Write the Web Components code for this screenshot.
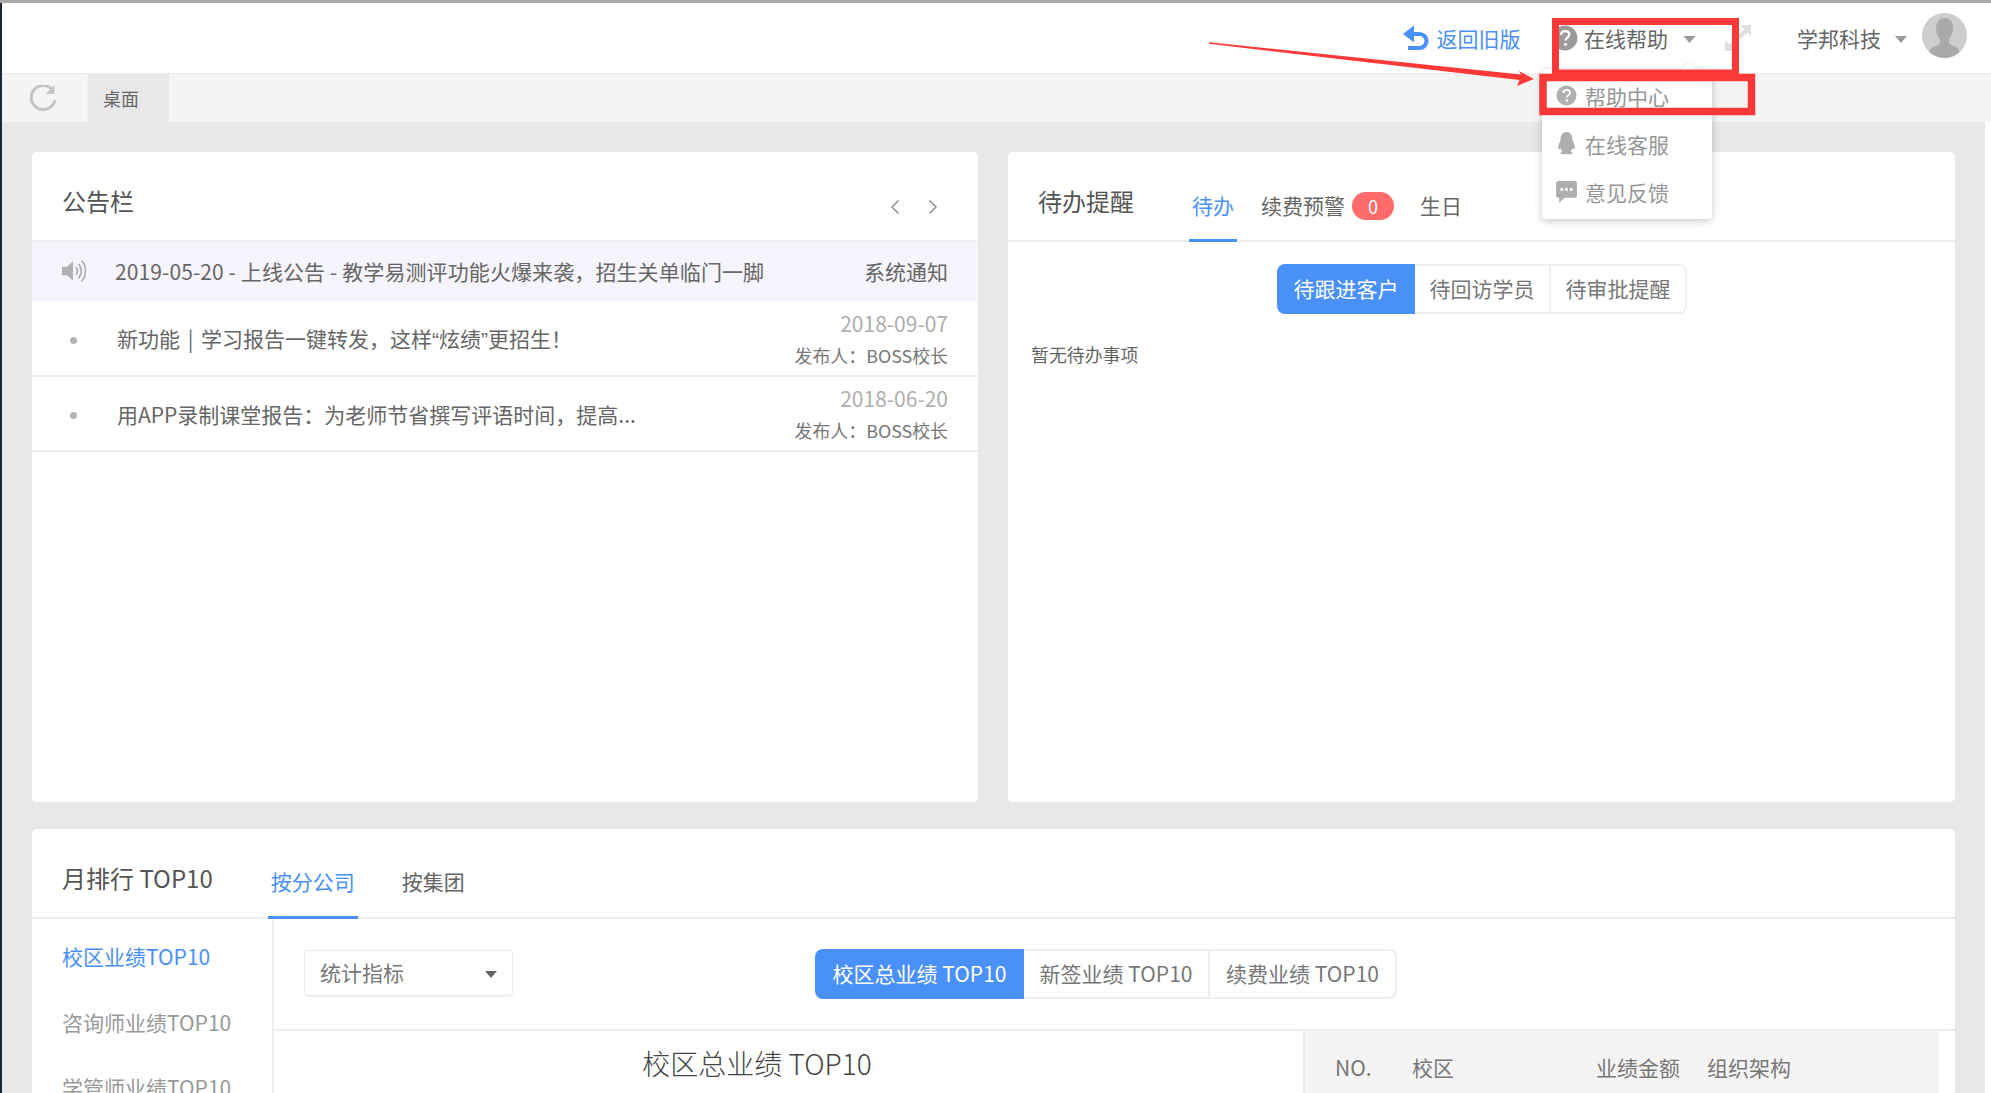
<!DOCTYPE html>
<html lang="zh"><head><meta charset="utf-8"><title>桌面</title>
<style>
html,body{margin:0;padding:0;height:1093px;overflow:hidden;background:#fff;font-family:"Noto Sans CJK SC","Noto Sans",sans-serif;color:#666}
</style></head><body>
<x-app></x-app>
<script>
const ICON={
q:c=>`<svg viewBox="0 0 24 24" width="100%" height="100%" style="display:block"><circle cx="12" cy="12" r="11.500" fill="${c}"/><path d="M8.300 9.300c.1-2.400 1.700-3.700 3.900-3.700 2.100 0 3.700 1.200 3.700 3.200 0 1.500-.8 2.300-1.800 3-1 .7-1.500 1.200-1.500 2.500" fill="none" stroke="#fff" stroke-width="2.200"/><circle cx="12.500" cy="17.800" r="1.500" fill="#fff"/></svg>`,
caret:c=>`<svg viewBox="0 0 12 7" width="100%" height="100%" style="display:block"><path d="M0 0h12L6 7z" fill="${c}"/></svg>`
};
function def(name,css,html){
  customElements.define(name,class extends HTMLElement{
    constructor(){super();const r=this.attachShadow({mode:'open'});
      const a=n=>this.getAttribute(n)||'';
      r.innerHTML=`<style>${css}</style>${typeof html==='function'?html(a,this):html}`;}
  });
}
def('x-help-menu',`
:host{position:absolute;left:1542px;top:66px;width:170px;height:150px;background:#fff;border-radius:4px;box-shadow:0 2px 8px rgba(0,0,0,.22);z-index:5;display:flex;flex-direction:column;padding-top:2.500px;box-sizing:border-box}
.tip{position:absolute;left:142px;top:-5px;width:10px;height:10px;background:#fff;transform:rotate(45deg);box-shadow:-1px -1px 2px rgba(0,0,0,.06)}
.i{height:48px;display:flex;align-items:center;padding-left:14px;gap:8px;font-size:21px;color:#969696;position:relative}
.ic{width:21px;height:25px;flex:none;display:block}
`,`<div class="tip"></div>
<div class="i"><span class="ic">${ICON.q('#b0b0b0')}</span>帮助中心</div>
<div class="i"><span class="ic"><svg viewBox="0 0 20 24" width="100%" height="100%" style="display:block"><path d="M10 1c3.800 0 5.700 3 5.700 7 0 1.500.8 2.500 1.500 4.200.9 2.200 1 4.800.1 5.300-.5.3-1.200-.5-1.700-1.500-.2 1.500-.8 2.800-1.800 3.700 1.200.4 2 .9 2 1.500 0 1-2 1.300-3.600 1.300-1 0-1.800-.2-2.200-.7-.4.5-1.200.7-2.200.7-1.600 0-3.600-.3-3.600-1.300 0-.6.8-1.100 2-1.500-1-.9-1.600-2.200-1.800-3.700-.5 1-1.200 1.800-1.700 1.500-.9-.5-.8-3.100.1-5.300C3.500 10.500 4.300 9.500 4.300 8c0-4 1.900-7 5.700-7z" fill="#aeaeae"/></svg></span>在线客服</div>
<div class="i"><span class="ic"><svg viewBox="0 0 20 24" width="100%" height="100%" style="display:block"><path d="M2 2h16a2 2 0 0 1 2 2v12a2 2 0 0 1-2 2H8l-5 5v-5H2a2 2 0 0 1-2-2V4a2 2 0 0 1 2-2z" fill="#aeaeae"/><g fill="#fff"><circle cx="5.500" cy="10" r="1.500"/><circle cx="10" cy="10" r="1.500"/><circle cx="14.500" cy="10" r="1.500"/></g></svg></span>意见反馈</div>`);

def('x-annotation',`
:host{position:absolute;left:0;top:0;width:1991px;height:1093px;pointer-events:none;z-index:9;display:block}
svg{display:block}`,`<svg width="1991" height="1093" viewBox="0 0 1991 1093">
<g fill="none" stroke="#fc3838">
<path d="M1555.500 18.500H1735.500V70H1555.500Z" stroke-width="7"/>
<path d="M1543 74.500H1751.500V108.500H1543Z" stroke-width="7.500"/>
</g>
<polygon points="1209,39.300 1521,71.500 1519,68 1534,76 1517,83 1519.500,77 1209,40.800" fill="#fc3838"/>
</svg>`);

def('x-app-header',`
:host{display:flex;align-items:center;justify-content:flex-end;height:70px;padding-right:24px;background:#fff;border-bottom:1px solid #ececec;box-sizing:content-box;font-size:21px;color:#666}
.f{display:flex;align-items:center}
.back{color:#4a90f9;gap:8px;margin-right:31.500px}
.back svg{width:27px;height:27px;display:block}
.q{width:26px;height:26px;margin-right:6px;flex:none}
.c{width:13px;height:7px;flex:none;margin-left:15px;margin-top:2px;display:block}
.fs{width:26px;height:26px;margin:0 46px 0 29px;flex:none}
.fs svg,.ava svg{display:block}
.ava{width:45px;height:45px;border-radius:50%;overflow:hidden;background:#cdcdcd;margin-left:15px;margin-top:-6px;flex:none}
`,`<div class="f back"><svg viewBox="0 0 27 27"><path d="M9 9h8.500a6.500 6.500 0 0 1 0 14H6" fill="none" stroke="#4a90f9" stroke-width="4.200"/><path d="M12 0v17L1 8.500z" fill="#4a90f9" transform="translate(0 .5)"/></svg><span>返回旧版</span></div>
<div class="f"><span class="q">${ICON.q('#9a9a9a')}</span><span>在线帮助</span><span class="c">${ICON.caret('#9a9a9a')}</span></div>
<span class="fs"><svg viewBox="0 0 26 26" width="26" height="26"><g fill="#dedede"><path d="M15 0h11v11l-3.800-3.800-6.500 6.500-2.900-2.900 6.500-6.500z"/><path d="M0 15v11h11l-3.800-3.800 6.500-6.500-2.900-2.900-6.500 6.500z"/></g></svg></span>
<span>学邦科技</span><span class="c" style="margin-left:14px;width:12px">${ICON.caret('#9a9a9a')}</span>
<span class="ava"><svg viewBox="0 0 45 45" width="45" height="45"><path d="M22.500 5c5.500 0 8.500 4.500 8.500 10.500 0 4-1.500 8-4 10.500v3.500c0 1.500 3 3 7 4.500 3 1.200 4 5 4 11.500H7c0-6.500 1-10.300 4-11.500 4-1.500 7-3 7-4.500V26c-2.500-2.500-4-6.500-4-10.500C14 9.500 17 5 22.500 5z" fill="#a9a9a9"/></svg></span>`);

def('x-tab-strip',`
:host{display:flex;height:48px;background:#f4f4f4;align-items:stretch}
.r{width:84px;display:flex;align-items:center;padding-left:28px;box-sizing:border-box;border-right:2px solid #f8f8f8}
.r svg{width:27px;height:26px;display:block}
.t{width:81px;margin-left:2px;background:#e8e8e8;font-size:17.900px;color:#666;padding-left:15px;box-sizing:border-box;display:flex;align-items:center}
`,`<div class="r"><svg viewBox="0 0 27 26"><path d="M23 5.500A12 12 0 1 0 25 15" fill="none" stroke="#c4c4c4" stroke-width="3"/><path d="M24.500 0v9h-9z" fill="#c4c4c4"/></svg></div><div class="t">桌面</div>`);

def('x-card',`
:host{display:flex;flex-direction:column;background:#fff;border-radius:5px;overflow:hidden;min-width:0}
.h{height:88px;border-bottom:2px solid #eee;display:flex;align-items:flex-end;box-sizing:content-box;padding-left:30px;flex:none;position:relative}
::slotted([slot=title]){font-size:24px;line-height:34px;color:#555;margin-bottom:22px;flex:none}
`,`<div class="h"><slot name="title"></slot><slot name="tools"></slot></div><slot></slot>`);

def('x-notice-row',`
:host{display:flex;height:73px;border-bottom:2px solid #eee;align-items:center;padding:0 30px 0 0;box-sizing:content-box;font-size:21px;color:#666}
.d{width:7px;height:7px;background:#b4b4b4;border-radius:50%;margin:4px 0 0 38px;flex:none}
.t{margin-left:40px;flex:1;line-height:30px;margin-top:1px;word-spacing:3px}
.t span{font-family:"Liberation Sans",sans-serif}
.m{text-align:right;display:flex;flex-direction:column;align-items:flex-end;padding-top:2px}
.a{color:#aeaeae;line-height:33px;height:33px}
.b{font-size:17.900px;color:#777;line-height:33px;height:33px;margin-top:-1px}
`,(a)=>`<span class="d"></span><span class="t">${a('text').replace(/[“”]/g,m=>`<span>${m}</span>`)}</span><div class="m"><span class="a">${a('date')}</span><span class="b">发布人：BOSS校长</span></div>`);

def('x-pinned-row',`
:host{display:flex;height:60px;background:#f6f4fc;align-items:center;padding:0 30px;font-size:21px;color:#666}
svg{width:24px;height:24px;display:block;flex:none;margin-top:-2px}
.t{margin-left:29px;flex:1;margin-top:-2px;letter-spacing:.1px}
.s{margin-top:-2px}
`,`<svg viewBox="0 0 24 22" preserveAspectRatio="none"><path d="M0 7h5l6-5v18l-6-5H0z" fill="#b0b0b0"/><g fill="none" stroke="#b0b0b0" stroke-width="1.800"><path d="M14 7.500a5 5 0 0 1 0 7"/><path d="M16.500 4.500a9 9 0 0 1 0 13"/><path d="M19.500 1.500a13 13 0 0 1 0 19"/></g></svg><span class="t">2019-05-20 - 上线公告 - 教学易测评功能火爆来袭，招生关单临门一脚</span><span class="s">系统通知</span>`);

def('x-notice-card',`
:host{display:flex;width:946px;height:650px}
x-card{width:100%}
.nav{margin-left:auto;display:flex;gap:28px;padding:0 40px 26px 0;align-self:flex-end}
.nav svg{width:10px;height:14px;display:block}
`,`<x-card><span slot="title">公告栏</span>
<div class="nav" slot="tools"><svg viewBox="0 0 10 14"><path d="M8.500 .5 2 7l6.500 6.500" fill="none" stroke="#909090" stroke-width="1.500"/></svg><svg viewBox="0 0 10 14"><path d="M1.500 .5 8 7l-6.500 6.500" fill="none" stroke="#909090" stroke-width="1.500"/></svg></div>
<x-pinned-row></x-pinned-row>
<x-notice-row text="新功能 | 学习报告一键转发，这样“炫绩”更招生！" date="2018-09-07"></x-notice-row>
<x-notice-row text="用APP录制课堂报告：为老师节省撰写评语时间，提高..." date="2018-06-20"></x-notice-row>
</x-card>`);

def('x-seg',`
:host{display:inline-flex;height:50px;font-size:21px;color:#777}
.b{display:flex;align-items:center;justify-content:center;box-sizing:border-box;border:2px solid #eee;border-left:0;padding-bottom:3px}
.b:last-child{border-radius:0 8px 8px 0}
.on{background:#4a90f9;color:#fff;border:0;border-radius:8px 0 0 8px}
`,(a)=>{const w=a('widths').split(',');return a('items').split(',').map((t,i)=>`<div class="b ${i==0?'on':''}" style="width:${w[i]}px">${t}</div>`).join('')});

def('x-tab',`
:host{display:flex;height:58px;align-items:flex-start;box-sizing:border-box;position:relative;line-height:30px}
:host([on]){color:#4a90f9}
:host([on])::after{content:"";position:absolute;left:-3px;right:-3px;bottom:-2px;height:3px;background:#4a90f9}
`,`<slot></slot>`);

def('x-todo-card',`
:host{display:flex;width:947px;height:650px}
x-card{width:100%}
.tabs{margin-left:58px;display:flex;align-items:flex-start;height:50px;align-self:flex-end;font-size:21px;color:#666}
.bd{display:inline-flex;align-items:center;justify-content:center;width:42px;height:28px;border-radius:14px;background:#ff6b6b;color:#fff;font-size:18px;margin-left:7px;line-height:28px;position:relative;top:2px}
.body{position:relative;flex:1}
.seg{display:flex;padding-top:22px;margin-left:269px}
.e{font-size:17.900px;color:#666;margin:25px 0 0 23px;line-height:30px}
`,`<x-card><span slot="title">待办提醒</span>
<div class="tabs" slot="tools">
<x-tab on style="height:50px">待办</x-tab>
<x-tab style="height:50px;margin-left:27px">续费预警<span class="bd">0</span></x-tab>
<x-tab style="height:50px;margin-left:26px">生日</x-tab></div>
<div class="body"><div class="seg"><x-seg items="待跟进客户,待回访学员,待审批提醒" widths="138,136,136"></x-seg></div>
<div class="e">暂无待办事项</div></div></x-card>`);

def('x-select',`
:host{display:flex;width:209px;height:46px;box-sizing:border-box;border:1px solid #e8e8e8;border-radius:4px;box-shadow:0 1px 1px rgba(0,0,0,.05);align-items:center;padding:0 15px;justify-content:space-between;font-size:21px;color:#777;flex:none}
span{margin-top:-2px}
i{display:block;width:12px;height:7px;margin-top:3px}
`,`<span>统计指标</span><i>${ICON.caret('#666')}</i>`);

def('x-rank-card',`
:host{display:flex;width:1923px;height:400px;flex:none}
x-card{width:100%}
.tabs{margin-left:58px;display:flex;align-items:flex-start;height:51px;align-self:flex-end;font-size:21px;color:#666}
.w{display:flex;flex:1;min-height:0}
.rail{width:240px;border-right:2px solid #eee;padding-top:4px;flex:none;font-size:21px;color:#999}
.rail div{height:65.500px;line-height:66px;padding-left:30px;white-space:nowrap}
.rail .on{color:#4a90f9}
.main{flex:1;min-width:0;display:flex;flex-direction:column}
.bar{height:110px;border-bottom:2px solid #eee;display:flex;align-items:flex-start;flex:none}
x-select{margin:31px 0 0 30px}
x-seg{margin:30px 0 0 302px}
.row{display:flex;flex:1;margin-right:16px}
.ch{flex:1;text-align:center;font-size:28px;color:#444;line-height:40px;padding:12px 63px 0 0;font-weight:300}
.tb{width:636px;box-sizing:border-box;background:#f4f4f4;border-left:2px solid #e8e8e8;border-top:2px solid #eee;margin-top:-2px;font-size:21px;color:#777;display:flex;align-items:flex-start;padding-top:21px;line-height:30px}
.tb span{flex:none}
`,`<x-card><span slot="title">月排行 TOP10</span>
<div class="tabs" slot="tools"><x-tab on style="height:51px">按分公司</x-tab><x-tab style="height:51px;margin-left:47px">按集团</x-tab></div>
<div class="w"><div class="rail"><div class="on">校区业绩TOP10</div><div>咨询师业绩TOP10</div><div>学管师业绩TOP10</div></div>
<div class="main"><div class="bar"><x-select></x-select><x-seg items="校区总业绩 TOP10,新签业绩 TOP10,续费业绩 TOP10" widths="209,186,187"></x-seg></div>
<div class="row"><div class="ch">校区总业绩 TOP10</div><div class="tb"><span style="margin-left:30px;width:77px">NO.</span><span style="width:184px">校区</span><span style="width:111px">业绩金额</span><span>组织架构</span></div></div></div></div></x-card>`);

def('x-app',`
:host{display:flex;flex-direction:column;height:1093px;width:1991px;position:relative;overflow:hidden;border-top:3px solid #a8a8a8;box-sizing:border-box;background:#fff}
.o{display:flex;flex-direction:column;flex:1;border-left:2px solid #1d2733;min-height:0}
.c{flex:1;background:#e8e8e8;padding:30px 0 0 30px;margin-right:6px;display:flex;flex-direction:column;gap:27px;min-height:0;overflow:hidden}
.r{display:flex;gap:30px;flex:none}
`,`<div class="o"><x-app-header></x-app-header><x-tab-strip></x-tab-strip>
<div class="c"><div class="r"><x-notice-card></x-notice-card><x-todo-card></x-todo-card></div><x-rank-card></x-rank-card></div></div>
<x-help-menu></x-help-menu><x-annotation></x-annotation>`);
</script></body></html>
